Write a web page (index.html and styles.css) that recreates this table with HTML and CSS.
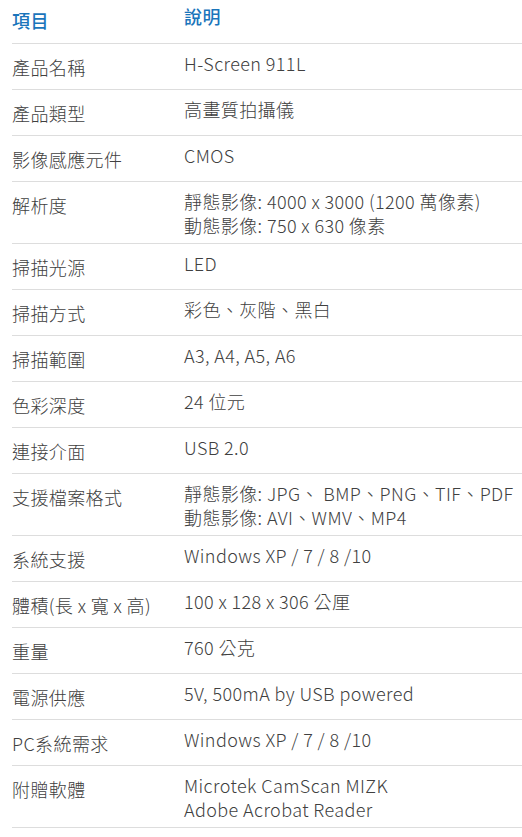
FILE: index.html
```html
<!DOCTYPE html>
<html lang="zh-Hant">
<head>
<meta charset="utf-8">
<title>產品規格</title>
<link rel="stylesheet" href="styles.css">
</head>
<body>
<div class="spec">
  <div class="row head"><div class="k">項目</div><div class="v">說明</div></div>
  <div class="row"><div class="k">產品名稱</div><div class="v">H-Screen 911L</div></div>
  <div class="row"><div class="k">產品類型</div><div class="v">高畫質拍攝儀</div></div>
  <div class="row"><div class="k">影像感應元件</div><div class="v">CMOS</div></div>
  <div class="row"><div class="k">解析度</div><div class="v"><div>靜態影像: 4000 x 3000 (1200 萬像素)</div><div>動態影像: 750 x 630 像素</div></div></div>
  <div class="row"><div class="k">掃描光源</div><div class="v">LED</div></div>
  <div class="row"><div class="k">掃描方式</div><div class="v">彩色、灰階、黑白</div></div>
  <div class="row"><div class="k">掃描範圍</div><div class="v">A3, A4, A5, A6</div></div>
  <div class="row"><div class="k">色彩深度</div><div class="v">24 位元</div></div>
  <div class="row"><div class="k">連接介面</div><div class="v">USB 2.0</div></div>
  <div class="row"><div class="k">支援檔案格式</div><div class="v"><div>靜態影像: JPG、 BMP、PNG、TIF、PDF</div><div>動態影像: AVI、WMV、MP4</div></div></div>
  <div class="row"><div class="k">系統支援</div><div class="v">Windows XP / 7 / 8 /10</div></div>
  <div class="row"><div class="k">體積(長 x 寬 x 高)</div><div class="v">100 x 128 x 306 公厘</div></div>
  <div class="row"><div class="k">重量</div><div class="v">760 公克</div></div>
  <div class="row"><div class="k">電源供應</div><div class="v">5V, 500mA by USB powered</div></div>
  <div class="row"><div class="k">PC系統需求</div><div class="v">Windows XP / 7 / 8 /10</div></div>
  <div class="row"><div class="k">附贈軟體</div><div class="v"><div>Microtek CamScan MIZK</div><div>Adobe Acrobat Reader</div></div></div>
</div>
</body>
</html>
```
FILE: styles.css
```css
html, body {
  margin: 0;
  padding: 0;
  background: #ffffff;
}
body {
  font-family: "Noto Sans CJK TC", "Noto Sans", sans-serif;
  font-size: 18px;
  font-weight: 300;
  letter-spacing: 0.4px;
  color: #404040;
}
.spec {
  margin-left: 12px;
}
.row {
  display: grid;
  grid-template-columns: 172px 1fr;
  align-items: start;
  border-bottom: 1px solid #dddddd;
}
.k {
  padding: 9px 0 7px 0;
  line-height: 29px;
  white-space: nowrap;
}
.v {
  padding: 7px 0 6px 0;
  line-height: 24px;
  white-space: nowrap;
}
.head {
  color: #1a75bb;
  font-weight: 500;
}
.head .k {
  padding: 6px 0 8px 0;
}
.head .v {
  padding: 4px 0 0 0;
}
```
